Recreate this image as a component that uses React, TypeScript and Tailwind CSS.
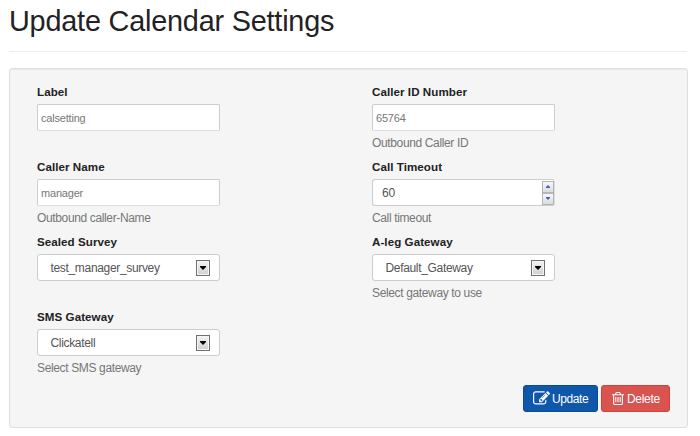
import React from 'react';

function Field({ label, help, children }: { label: string; help?: string; children: React.ReactNode }) {
  return (
    <div className="h-[75px] w-[335px]">
      <label className="block h-[19px] text-[11.6px] leading-[14px] font-bold tracking-[0.06px] text-[#222]">{label}</label>
      {children}
      {help && <p className="mt-[4px] text-[12px] leading-[17px] tracking-[-0.36px] text-[#777]">{help}</p>}
    </div>
  );
}

const box = 'flex h-[27px] w-[183px] items-center border border-[#ccc] bg-white';

function TextBox({ value }: { value: string }) {
  return (
    <div className={`${box} rounded-[2px] border-b-[#ddd] pt-px pl-[3px] text-[11px] tracking-[-0.2px] text-[#777]`}>
      <span className="whitespace-pre">{value}</span>
    </div>
  );
}

function SelectBox({ value }: { value: string }) {
  return (
    <div className={`${box} justify-between rounded-[3px] pr-[9px] pl-[12.5px] text-[12px] tracking-[-0.33px] text-[#555]`}>
      <span>{value}</span>
      <span className="flex h-[16px] w-[14px] items-center justify-center border border-[#707070] bg-gradient-to-b from-[#f4f4f4] to-[#cfcfcf] shadow-[inset_0_0_0_1px_#f5f5f5]">
        <svg width="6" height="4" viewBox="0 0 6 4"><path d="M0 0h6v1L3 4 0 1z" fill="#000" /></svg>
      </span>
    </div>
  );
}

function SpinBox({ value }: { value: string }) {
  const half = 'flex h-[12px] w-[12px] items-center justify-center border border-[#b5b5b5] bg-gradient-to-b from-[#f7f7f7] to-[#dcdcdc]';
  return (
    <div className={`${box} justify-between rounded-[3px] border-r-[#ddd] pl-[9px] text-[12px] tracking-[-0.2px] text-[#555]`}>
      <span>{value}</span>
      <span className="flex flex-col">
        <span className={half}>
          <svg width="4" height="3" viewBox="0 0 4 3"><path d="M2 0l2 2v1H0V2z" fill="#4564bd" /></svg>
        </span>
        <span className={half}>
          <svg width="4" height="3" viewBox="0 0 4 3"><path d="M0 0h4v1L2 3 0 1z" fill="#4564bd" /></svg>
        </span>
      </span>
    </div>
  );
}

function EditIcon() {
  return (
    <svg className="-ml-px shrink-0" width="17" height="17" viewBox="0 0 1792 1792" fill="#fff">
      <path d="M888 1184l116-116-152-152-116 116v56h96v96h56zm440-720q-16-16-33 1l-350 350q-17 17-1 33t33-1l350-350q17-17 1-33zm80 594v190q0 119-84.5 203.5t-203.5 84.5h-832q-119 0-203.5-84.5t-84.5-203.5v-832q0-119 84.5-203.5t203.5-84.5h832q63 0 117 25 15 7 18 23 3 17-9 29l-49 49q-14 14-32 8-23-6-45-6h-832q-66 0-113 47t-47 113v832q0 66 47 113t113 47h832q66 0 113-47t47-113v-126q0-13 9-22l64-64q15-15 35-7t20 29zm-96-738l288 288-672 672h-288v-288zm444 132l-92 92-288-288 92-92q28-28 68-28t68 28l152 152q28 28 28 68t-28 68z" />
    </svg>
  );
}

function TrashIcon() {
  return (
    <svg className="-mt-px shrink-0" width="12" height="13" viewBox="192 128 1408 1536" fill="#fff" preserveAspectRatio="none">
      <path d="M704 736v576q0 14-9 23t-23 9h-64q-14 0-23-9t-9-23v-576q0-14 9-23t23-9h64q14 0 23 9t9 23zm256 0v576q0 14-9 23t-23 9h-64q-14 0-23-9t-9-23v-576q0-14 9-23t23-9h64q14 0 23 9t9 23zm256 0v576q0 14-9 23t-23 9h-64q-14 0-23-9t-9-23v-576q0-14 9-23t23-9h64q14 0 23 9t9 23zm128 724v-948h-896v948q0 22 7 40.5t14.5 27 10.5 8.5h832q3 0 10.5-8.5t14.5-27 7-40.5zm-672-1076h448l-48-117q-7-9-17-11h-317q-10 2-17 11zm928 32v64q0 14-9 23t-23 9h-96v948q0 83-47 143.5t-113 60.5h-832q-66 0-113-58.5t-47-141.5v-952h-96q-14 0-23-9t-9-23v-64q0-14 9-23t23-9h309l70-167q15-37 54-63t79-26h320q40 0 79 26t54 63l70 167h309q14 0 23 9t9 23z" />
    </svg>
  );
}

export default function App() {
  return (
    <div className="h-[436px] w-[700px] overflow-hidden bg-white pl-[9px] font-['Liberation_Sans',Arial,sans-serif]">
      <header className="h-[52px] w-[678px] border-b border-[#eee] pt-[4px]">
        <h1 className="text-[28.8px] leading-[34px] tracking-[-0.19px] text-[#222]">Update Calendar Settings</h1>
      </header>
      <main className="mt-[16px] flex h-[360px] w-[679px] flex-col rounded-[3px] border border-[#dfdfdf] bg-[#f5f5f5] pt-[16px] pl-[27px] shadow-[inset_0_1px_1px_rgba(0,0,0,0.05)]">
        <div className="grid grid-cols-[335px_335px]">
          <Field label="Label"><TextBox value="calsetting" /></Field>
          <Field label="Caller ID Number" help="Outbound Caller ID"><TextBox value="65764" /></Field>
          <Field label="Caller Name" help="Outbound caller-Name"><TextBox value="manager" /></Field>
          <Field label="Call Timeout" help="Call timeout"><SpinBox value="60" /></Field>
          <Field label="Sealed Survey"><SelectBox value="test_manager_survey" /></Field>
          <Field label="A-leg Gateway" help="Select gateway to use"><SelectBox value="Default_Gateway" /></Field>
          <Field label="SMS Gateway" help="Select SMS gateway"><SelectBox value="Clickatell" /></Field>
        </div>
        <div className="flex gap-[3px] pl-[486px]">
          <button className="flex h-[27px] w-[75px] items-center gap-[2px] rounded-[3px] border border-[#0a4b98] bg-[#0e57aa] pl-[10px] text-[12px] tracking-[-0.4px] text-white"><EditIcon />Update</button>
          <button className="flex h-[27px] w-[69px] items-center gap-[3px] rounded-[3px] border border-[#d43f3a] bg-[#d9534f] pl-[10px] text-[12px] tracking-[-0.3px] text-white"><TrashIcon />Delete</button>
        </div>
      </main>
    </div>
  );
}
